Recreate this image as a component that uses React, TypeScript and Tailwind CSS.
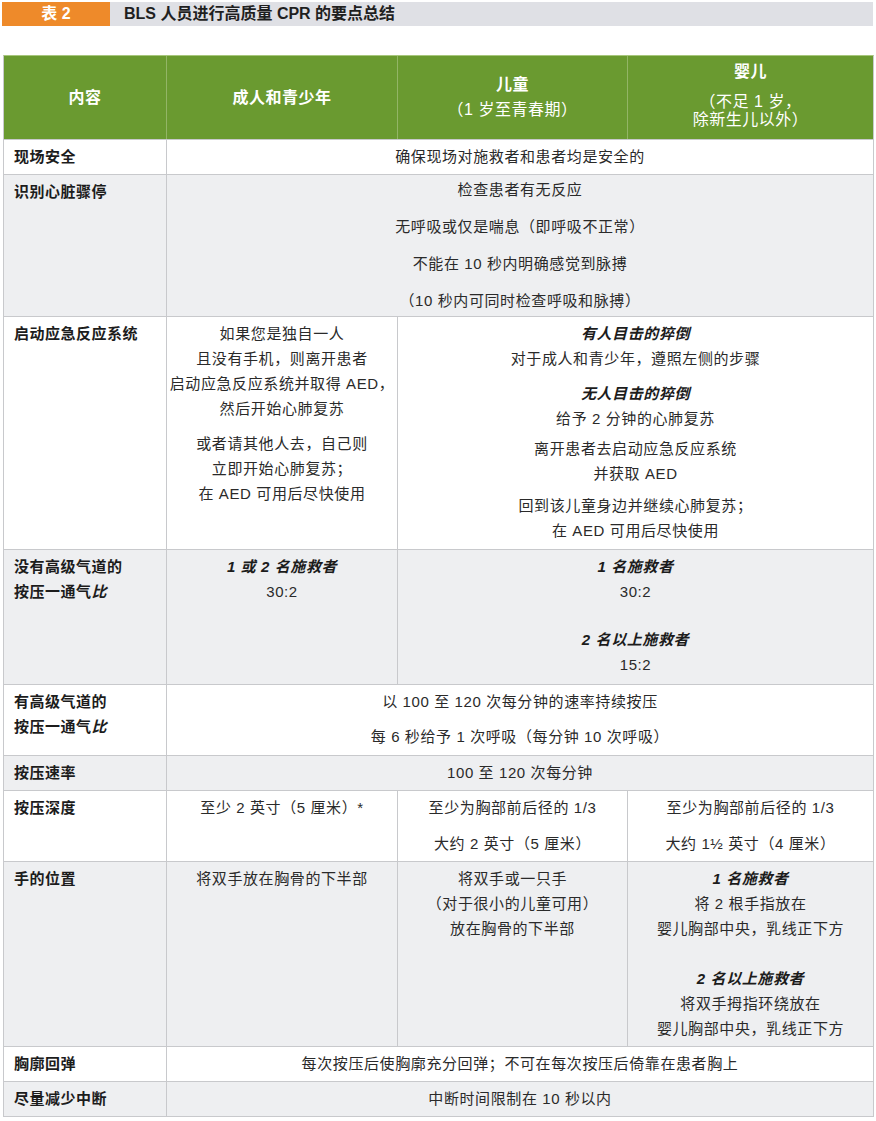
import type { ReactNode } from "react";

const font = "font-['Liberation_Sans','Noto_Sans_CJK_SC',sans-serif]";

function Label({ children, gray }: { children: ReactNode; gray?: boolean }) {
  return (
    <div
      className={`${gray ? "bg-[#eeeff1]" : "bg-white"} px-[10px] pt-1 text-[15px] leading-[25px] font-bold tracking-[0.5px] text-[#1c1c1c]`}
    >
      {children}
    </div>
  );
}

function Cell({
  children,
  gray,
  span,
  pt = "pt-1",
}: {
  children: ReactNode;
  gray?: boolean;
  span?: string;
  pt?: string;
}) {
  return (
    <div
      className={`${gray ? "bg-[#eeeff1]" : "bg-white"} ${span ?? ""} ${pt} flex flex-col items-center text-center text-[15px] leading-[25px] tracking-[0.6px] text-[#2a2a2a]`}
    >
      {children}
    </div>
  );
}

function Sub({ children }: { children: ReactNode }) {
  return <div className="font-bold italic text-[#1c1c1c]">{children}</div>;
}

export default function App() {
  return (
    <div className={`${font} w-[876px] min-h-[1121px] bg-white pt-[2px]`}>
      {/* title bar */}
      <div className="ml-[2px] flex h-[24px] w-[871px]">
        <div className="flex w-[108px] items-center justify-center bg-[#ee8a2a] text-[16px] font-bold text-white">
          表 2
        </div>
        <div className="flex flex-1 items-center bg-[#dfe0e5] pl-[14px] text-[16px] font-bold text-[#1f1f1f]">
          BLS 人员进行高质量 CPR 的要点总结
        </div>
      </div>

      {/* table */}
      <div className="mt-[29px] ml-[3px] flex w-[871px] flex-col gap-px border border-[#c8c9cc] border-t-[#a7c67c] bg-[#c8c9cc]">
        <div className="grid h-[83px] grid-cols-[162px_230px_229px_245px] gap-x-px bg-[#93b566] text-white">
          <div className="flex items-center justify-center bg-[#6a9a30] text-[16px] font-bold tracking-[0.5px]">
            内容
          </div>
          <div className="flex items-center justify-center bg-[#6a9a30] text-[16px] font-bold tracking-[0.5px]">
            成人和青少年
          </div>
          <div className="flex flex-col items-center justify-center bg-[#6a9a30] tracking-[0.5px]">
            <div className="text-[16px] leading-[20px] font-bold">儿童</div>
            <div className="mt-[5px] text-[16px] leading-[20px]">（1 岁至青春期）</div>
          </div>
          <div className="flex flex-col items-center bg-[#6a9a30] pt-[6px] tracking-[0.5px]">
            <div className="text-[16px] leading-[20px] font-bold">婴儿</div>
            <div className="mt-[11px] text-[16px] leading-[18px]">（不足 1 岁，</div>
            <div className="text-[16px] leading-[18px]">除新生儿以外）</div>
          </div>
        </div>

        <div className="grid grid-cols-[162px_230px_229px_245px] grid-rows-[34px_141px_232px_134px_70px_34px_70px_184px_34px_34px] gap-px">
          <Label>现场安全</Label>
          <Cell span="col-span-3">确保现场对施救者和患者均是安全的</Cell>

          <Label gray>识别心脏骤停</Label>
          <Cell gray span="col-span-3 gap-3" pt="pt-[2px]">
            <div>检查患者有无反应</div>
            <div>无呼吸或仅是喘息（即呼吸不正常）</div>
            <div>不能在 10 秒内明确感觉到脉搏</div>
            <div>（10 秒内可同时检查呼吸和脉搏）</div>
          </Cell>

          <Label>启动应急反应系统</Label>
          <Cell>
            <div>如果您是独自一人</div>
            <div>且没有手机，则离开患者</div>
            <div>启动应急反应系统并取得 AED，</div>
            <div>然后开始心肺复苏</div>
            <div className="mt-[10px]">或者请其他人去，自己则</div>
            <div>立即开始心肺复苏；</div>
            <div>在 AED 可用后尽快使用</div>
          </Cell>
          <Cell span="col-span-2">
            <Sub>有人目击的猝倒</Sub>
            <div>对于成人和青少年，遵照左侧的步骤</div>
            <div className="mt-[10px]">
              <Sub>无人目击的猝倒</Sub>
            </div>
            <div>给予 2 分钟的心肺复苏</div>
            <div className="mt-[5px]">离开患者去启动应急反应系统</div>
            <div>并获取 AED</div>
            <div className="mt-[7px]">回到该儿童身边并继续心肺复苏；</div>
            <div>在 AED 可用后尽快使用</div>
          </Cell>

          <Label gray>
            没有高级气道的
            <br />
            按压一通气<span className="italic">比</span>
          </Label>
          <Cell gray>
            <Sub>1 或 2 名施救者</Sub>
            <div>30:2</div>
          </Cell>
          <Cell gray span="col-span-2">
            <Sub>1 名施救者</Sub>
            <div>30:2</div>
            <div className="mt-[23px]">
              <Sub>2 名以上施救者</Sub>
            </div>
            <div>15:2</div>
          </Cell>

          <Label>
            有高级气道的
            <br />
            按压一通气<span className="italic">比</span>
          </Label>
          <Cell span="col-span-3">
            <div>以 100 至 120 次每分钟的速率持续按压</div>
            <div className="mt-[10px]">每 6 秒给予 1 次呼吸（每分钟 10 次呼吸）</div>
          </Cell>

          <Label gray>按压速率</Label>
          <Cell gray span="col-span-3">100 至 120 次每分钟</Cell>

          <Label>按压深度</Label>
          <Cell>至少 2 英寸（5 厘米）*</Cell>
          <Cell>
            <div>至少为胸部前后径的 1/3</div>
            <div className="mt-[11px]">大约 2 英寸（5 厘米）</div>
          </Cell>
          <Cell>
            <div>至少为胸部前后径的 1/3</div>
            <div className="mt-[11px]">大约 1½ 英寸（4 厘米）</div>
          </Cell>

          <Label gray>手的位置</Label>
          <Cell gray>将双手放在胸骨的下半部</Cell>
          <Cell gray>
            <div>将双手或一只手</div>
            <div>（对于很小的儿童可用）</div>
            <div>放在胸骨的下半部</div>
          </Cell>
          <Cell gray>
            <Sub>1 名施救者</Sub>
            <div>将 2 根手指放在</div>
            <div>婴儿胸部中央，乳线正下方</div>
            <div className="mt-[25px]">
              <Sub>2 名以上施救者</Sub>
            </div>
            <div>将双手拇指环绕放在</div>
            <div>婴儿胸部中央，乳线正下方</div>
          </Cell>

          <Label>胸廓回弹</Label>
          <Cell span="col-span-3">每次按压后使胸廓充分回弹；不可在每次按压后倚靠在患者胸上</Cell>

          <Label gray>尽量减少中断</Label>
          <Cell gray span="col-span-3">中断时间限制在 10 秒以内</Cell>
        </div>
      </div>
    </div>
  );
}
